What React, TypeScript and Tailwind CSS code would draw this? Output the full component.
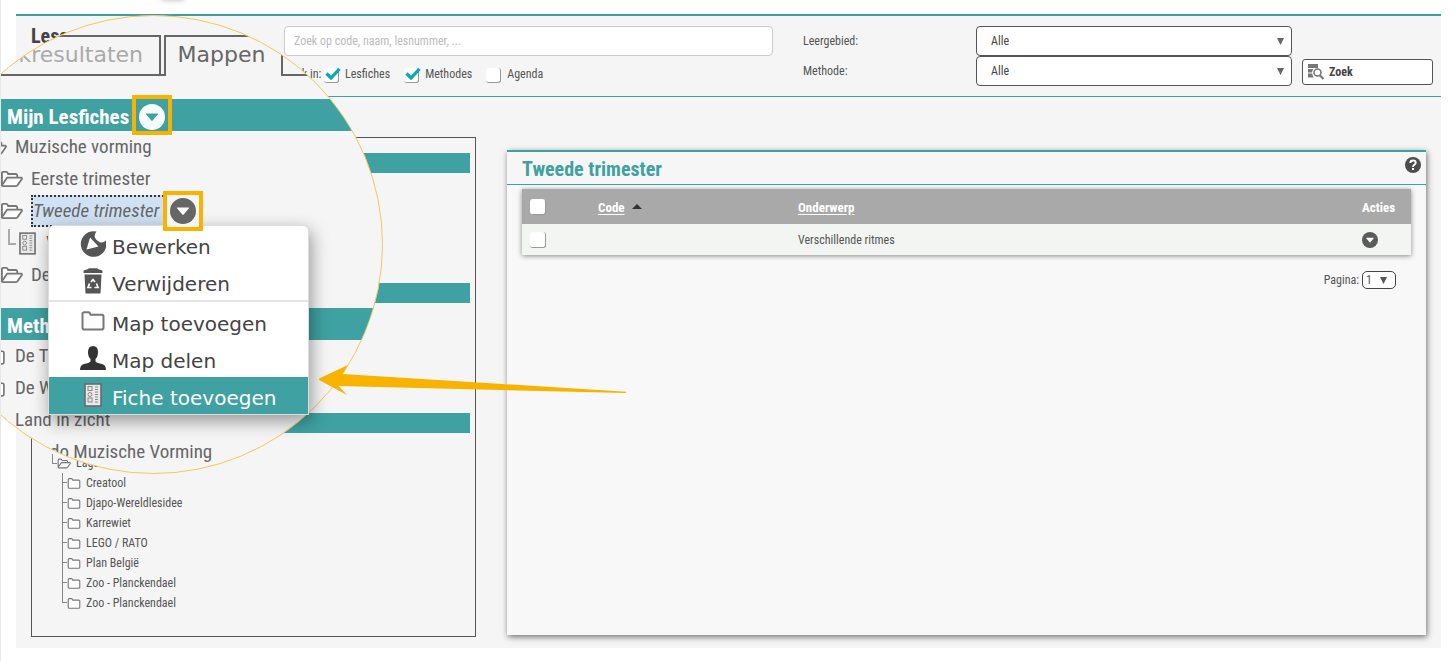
import type { ReactNode } from "react";

const condensed = "font-['Roboto_Condensed','Liberation_Sans_Narrow','Liberation_Sans',sans-serif]";
const wide = "font-['DejaVu_Sans',sans-serif]";

function OpenFolder({ className }: { className: string }) {
  return (
    <svg viewBox="0 0 24 18" className={className} fill="#fbfbfb" stroke="#777" strokeWidth="1.9" strokeLinejoin="round" aria-hidden="true">
      <path d="M2 15.5V3.2Q2 1.5 3.6 1.5h3.2Q8 1.5 8.4 3.8h8.2Q18 3.8 18 5.5V7.5H7.5L2 15.5Q2 16.5 3.5 16.5H16.5Q17.5 16.5 18.2 15.5L22.8 9Q23.4 7.5 21.8 7.5H18" />
    </svg>
  );
}

function Folder({ className }: { className: string }) {
  return (
    <svg viewBox="0 0 24 20" className={className} fill="#fdfdfd" stroke="#777" strokeWidth="2" strokeLinejoin="round" aria-hidden="true">
      <path d="M1.5 3Q1.5 1.2 3.2 1.2H7.5Q9 1.2 9.5 3.8H20.5Q22.5 3.8 22.5 5.6V16.8Q22.5 18.6 20.6 18.6H3.4Q1.5 18.6 1.5 16.8Z" />
    </svg>
  );
}

function Fiche({ className }: { className: string }) {
  return (
    <svg viewBox="0 0 18 24" className={className} fill="none" stroke="#8a8a8a" aria-hidden="true">
      <rect x="1" y="1" width="16" height="22" fill="#e9e9e9" stroke="#6a6a6a" strokeWidth="1.6" />
      <rect x="4" y="3.5" width="4" height="4" />
      <circle cx="6" cy="11.5" r="2" />
      <rect x="4" y="15" width="4" height="4" />
      <path d="M11 4h3M11 6.5h3M11 9h3M11 11.5h3M11 14h3M11 16.5h3M11 19h3" />
    </svg>
  );
}

function Down({ className, fill, arrow }: { className: string; fill: string; arrow: string }) {
  return (
    <svg viewBox="0 0 26 26" className={className} aria-hidden="true">
      <circle cx="13" cy="13" r="13" fill={fill} />
      <path d="M7.2 9.5h11.6q.6.4 0 1L13.6 16.6q-.6.6-1.2 0L7.2 10.5q-.5-.6 0-1z" fill={arrow} />
    </svg>
  );
}

function Check({ label, checked = false }: { label: string; checked?: boolean }) {
  return (
    <label className="relative flex items-center gap-1.5">
      <input
        type="checkbox"
        defaultChecked={checked}
        className="peer mt-[2px] h-[15px] w-[15px] appearance-none rounded-[3px] border-r border-b border-[#999] bg-white"
      />
      <svg viewBox="0 0 16 14" className="absolute top-[3px] left-[1px] hidden h-[14px] w-4 peer-checked:block" fill="none" stroke="#09a9b8" strokeWidth="3.2" aria-hidden="true">
        <path d="M1.5 6.5L6 11L14.5 1.8" />
      </svg>
      <span>{label}</span>
    </label>
  );
}

function RowCheck({ label }: { label: string }) {
  return (
    <input type="checkbox" aria-label={label} className="block h-4 w-4 appearance-none rounded-[3px] border-r border-b border-[#999] bg-white" />
  );
}

function Choice({ id, value }: { id: string; value: string }) {
  return (
    <div className="relative">
      <select id={id} className="block h-[30px] w-full appearance-none rounded border border-[#555] bg-white px-[14px] text-[12px] text-[#444]">
        <option>{value}</option>
      </select>
      <svg viewBox="0 0 8 8" className="pointer-events-none absolute top-3 right-2 h-[7px] w-[7px]" fill="#666" aria-hidden="true">
        <path d="M0 0h8L4 8z" />
      </svg>
    </div>
  );
}

function SearchBar() {
  return (
    <form className="grid grid-cols-[253px_minmax(0,1fr)_173px_316px_141px] border-t-2 border-b border-[#3fa1a1] pt-[10px] pr-2 pb-[10px] pl-[15px] text-[12px] text-[#555]">
      <h1 className="text-[20px] leading-5 font-bold text-[#444]">Lessen</h1>
      <div className="pr-[30px]">
        <input
          type="search"
          aria-label="Zoekterm"
          placeholder="Zoek op code, naam, lesnummer, ..."
          className="block h-[30px] w-full rounded border border-[#ccc] bg-white px-[9px] text-[12px] placeholder:text-[#bbb]"
        />
        <div className="flex items-center gap-[14px] pt-2 leading-5">
          <div className="flex items-center gap-1">
            <span className="w-9 whitespace-nowrap">Zoek in:</span>
            <Check label="Lesfiches" checked />
          </div>
          <Check label="Methodes" checked />
          <Check label="Agenda" />
        </div>
      </div>
      <div className="flex flex-col leading-[30px]">
        <label htmlFor="leergebied">Leergebied:</label>
        <label htmlFor="methode">Methode:</label>
      </div>
      <div>
        <Choice id="leergebied" value="Alle" />
        <Choice id="methode" value="Alle" />
      </div>
      <div className="flex items-end pb-[1px] pl-[10px]">
        <button type="button" className="flex h-[26px] grow items-center gap-1 rounded-[3px] border border-[#555] bg-white pl-1 font-bold text-[#444]">
          <svg viewBox="0 0 18 17" className="mb-[2px] h-[17px] w-[18px]" fill="#777" aria-hidden="true">
            <path d="M1 1h10v4H1zM1 6h5.2Q5 8 5 9.5H1zM1 10.5h4.2Q5.5 12.8 7 14.500H1z" />
            <path d="M13 12.5L16.5 16" stroke="#777" strokeWidth="2.2" />
            <circle cx="10.500" cy="9.500" r="3.5" fill="#fff" stroke="#777" strokeWidth="1.6" />
          </svg>
          Zoek
        </button>
      </div>
    </form>
  );
}

const folders = ["Creatool", "Djapo-Wereldlesidee", "Karrewiet", "LEGO / RATO", "Plan België", "Zoo - Planckendael", "Zoo - Planckendael"];

function TreePanel() {
  return (
    <nav className="w-[445px] shrink-0 border border-[#555] px-[5px] pt-[15px] pb-[23px] text-[12px] text-[#555]">
      <div className="mb-[110px] h-5 bg-[#3fa1a1]" />
      <div className="mb-[110px] h-5 bg-[#3fa1a1]" />
      <div className="mb-5 h-5 bg-[#3fa1a1]" />
      <div className="flex h-5 items-center pl-[15px] leading-5">
        <span className="-mt-2 h-[10px] w-[5px] border-b border-l border-[#888]" />
        <OpenFolder className="mr-[5px] h-[11px] w-[14px]" />
        Lager
      </div>
      <ul className="pl-[25px]">
        {folders.map((name, i) => (
          <li key={i} className="flex h-5 items-center leading-5">
            <span className="flex h-5 w-[5px] flex-col">
              <span className="h-[10px] border-b border-l border-[#888]" />
              {i < folders.length - 1 && <span className="grow border-l border-[#888]" />}
            </span>
            <Folder className="mr-[5px] h-[11px] w-[14px]" />
            <a href="#map">{name}</a>
          </li>
        ))}
      </ul>
    </nav>
  );
}

function LessonPanel() {
  return (
    <section className="mt-[13px] mb-[2px] min-w-0 grow border-t-2 border-[#3fa1a1] bg-[#f8f8f8] text-[12px] text-[#555] shadow-[1px_2px_6px_rgba(0,0,0,0.55)]">
      <div className="flex h-[33px] items-center justify-between border-b border-[#3fa1a1] bg-[#f6f6f6] pr-[5px] pl-[15px]">
        <h2 className="pt-[2px] text-[20px] leading-6 font-bold text-[#3fa1a1]">Tweede trimester</h2>
        <button type="button" aria-label="Help" className="mb-[6px]">
          <svg viewBox="0 0 16 16" className="block h-4 w-4" aria-hidden="true">
            <circle cx="8" cy="8" r="8" fill="#4d4d4d" />
            <path d="M5.3 6Q5.3 3.5 8 3.5T10.7 5.8Q10.7 7 9 8Q8 8.7 8 10" fill="none" stroke="#fff" strokeWidth="1.9" />
            <rect x="7" y="11" width="2" height="2" fill="#fff" />
          </svg>
        </button>
      </div>
      <div className="px-[15px] pt-1">
        <table className="w-full table-fixed border-collapse text-left shadow-[0_1px_5px_rgba(0,0,0,0.45)]">
          <thead>
            <tr className="h-[35px] bg-[#a9a9a9] text-[13px] text-white">
              <th className="w-[76px] pl-2"><RowCheck label="Alles" /></th>
              <th className="w-[200px] pt-[2px]">
                <a href="#code" className="underline underline-offset-2">Code</a>
                <svg viewBox="0 0 10 5" className="mb-[3px] ml-[7px] inline h-[5px] w-[10px]" fill="#333" aria-hidden="true"><path d="M0 5L5 0l5 5z" /></svg>
              </th>
              <th className="pt-[2px]"><a href="#onderwerp" className="underline underline-offset-2">Onderwerp</a></th>
              <th className="w-[49px] pt-[2px]">Acties</th>
            </tr>
          </thead>
          <tbody>
            <tr className="h-[31px] bg-[#f3f5f2]">
              <td className="pl-2"><RowCheck label="Verschillende ritmes" /></td>
              <td />
              <td>Verschillende ritmes</td>
              <td>
                <button type="button" aria-label="Acties" className="block">
                  <Down className="h-4 w-4" fill="#5b5b5b" arrow="#fff" />
                </button>
              </td>
            </tr>
          </tbody>
        </table>
        <div className="flex items-center justify-end gap-[3px] pt-4 pr-[15px]">
          <label htmlFor="pagina">Pagina:</label>
          <div className="relative">
            <select id="pagina" className="block h-[18px] w-[34px] appearance-none rounded-[5px] border border-[#444] bg-white pl-[3px] text-[12px] leading-4">
              <option>1</option>
            </select>
            <svg viewBox="0 0 8 8" className="pointer-events-none absolute top-[6px] right-[9px] h-[7px] w-[7px]" fill="#555" aria-hidden="true"><path d="M0 0h8L4 8z" /></svg>
          </div>
        </div>
      </div>
    </section>
  );
}

function LensRow({ icon, children }: { icon?: ReactNode; children: ReactNode }) {
  return <div className="flex h-8 items-center whitespace-nowrap">{icon}{children}</div>;
}

function LensHeading({ children }: { children: ReactNode }) {
  return <h2 className="flex h-8 items-center bg-[#3fa1a1] pt-[6px] pl-[7px] text-[21px] font-bold text-white">{children}</h2>;
}

function Lens() {
  return (
    <div className="absolute top-[15px] -left-[77px] h-[459px] w-[459px] overflow-hidden rounded-full border border-[#f3c95c] bg-[#f5f5f5] pt-[19px] pl-[75px] text-[19px] text-[#666]">
      <div className={`flex h-[41px] text-[22px] leading-[35px] ${wide}`}>
        <button type="button" className="flex w-[161px] justify-end border-2 border-l-0 border-[#666] pr-4 text-[#aaa]">Zoekresultaten</button>
        <div className="w-[3px] border-b-2 border-[#666]" />
        <button type="button" className="flex w-[119px] justify-center border-2 border-b-0 border-[#666] pr-1">Mappen</button>
        <div className="grow border-b-2 border-[#666]" />
      </div>
      <div className="pt-[23px]">
        <LensHeading>Mijn Lesfiches</LensHeading>
      </div>
      <LensRow icon={<OpenFolder className="mr-2 -ml-[15px] h-[18px] w-[22px] shrink-0" />}>Muzische vorming</LensRow>
      <LensRow icon={<OpenFolder className="mr-2 h-[18px] w-[23px] shrink-0" />}>Eerste trimester</LensRow>
      <LensRow icon={<OpenFolder className="mr-2 h-[18px] w-[23px] shrink-0" />}>
        <span className="w-[136px] border-2 border-dotted border-[#333] bg-[#cfe1f3] leading-7 italic">Tweede trimester</span>
      </LensRow>
      <LensRow
        icon={
          <>
            <span className="mr-[3px] mb-3 ml-2 h-4 w-2 border-b-2 border-l-2 border-[#aaa]" />
            <Fiche className="mr-[10px] h-[23px] w-[17px] shrink-0" />
          </>
        }
      >
        V
      </LensRow>
      <LensRow icon={<OpenFolder className="mr-2 h-[18px] w-[23px] shrink-0" />}>De</LensRow>
      <div className="pt-[17px]">
        <LensHeading>Meth</LensHeading>
      </div>
      <LensRow icon={<Folder className="mr-[9px] -ml-4 h-[17px] w-[22px] shrink-0" />}>De Ta</LensRow>
      <LensRow icon={<Folder className="mr-[9px] -ml-4 h-[17px] w-[22px] shrink-0" />}>De W</LensRow>
      <LensRow icon={<OpenFolder className="mr-[9px] -ml-4 h-[18px] w-[22px] shrink-0" />}>Land in zicht</LensRow>
      <LensRow><span className="pl-[50px]">do Muzische Vorming</span></LensRow>
    </div>
  );
}

function MenuItem({ icon, label, active = false }: { icon: ReactNode; label: string; active?: boolean }) {
  return (
    <button
      type="button"
      role="menuitem"
      className={`flex h-[37px] w-full items-center gap-[6px] pl-[31px] text-left whitespace-nowrap ${active ? "bg-[#3fa1a1] text-white" : "text-[#444]"}`}
    >
      <span className="flex w-[26px] justify-center pb-[2px]">{icon}</span>
      <span className="pt-1">{label}</span>
    </button>
  );
}

function ContextMenu() {
  return (
    <div role="menu" className={`absolute top-[225px] left-[47px] w-[261px] rounded-t-md border border-[#ddd] bg-white text-[20px] leading-6 shadow-[2px_6px_18px_rgba(0,0,0,0.4)] ${wide}`}>
      <MenuItem
        label="Bewerken"
        icon={
          <svg viewBox="0 0 26 26" className="h-[26px] w-[26px]" aria-hidden="true">
            <path d="M16.500 .6A12.800 12.800 0 1 0 25.900 9.500Q23 12.500 19.800 11.200Q16.500 10 14.800 6.500Q14.300 3 16.500 .6Z" fill="#555" />
            <path d="M10 6.500L18.500 15.500L6.500 18.500Z" fill="#fff" />
          </svg>
        }
      />
      <MenuItem
        label="Verwijderen"
        icon={
          <svg viewBox="0 0 20 26" className="h-[26px] w-5" aria-hidden="true">
            <path d="M.5 5V3Q1 1.6 4 1.4L6 .3h8l2 1.1q3 .2 3.5 1.6v2zM1.5 6.5h17L17.5 25.5H2.5z" fill="#555" />
            <path d="M8 14l2-2.500 2 2.500M13.500 15.500l1.500 4h-3.500M8.500 19.500H5L6.500 15.500" fill="none" stroke="#fff" strokeWidth="1.7" />
          </svg>
        }
      />
      <div className="mb-[1px] h-[2px] bg-[#e4e4e4]" />
      <MenuItem label="Map toevoegen" icon={<Folder className="h-5 w-6" />} />
      <MenuItem
        label="Map delen"
        icon={
          <svg viewBox="0 0 26 24" className="h-6 w-[26px]" fill="#333" aria-hidden="true">
            <path d="M13 0Q18 0 18 6Q18 11 15.5 13V15.5Q17 17 22 18Q26 19 26 24H0Q0 19 4 18Q9 17 10.5 15.5V13Q8 11 8 6Q8 0 13 0Z" />
          </svg>
        }
      />
      <MenuItem active label="Fiche toevoegen" icon={<Fiche className="h-6 w-[18px]" />} />
    </div>
  );
}

export default function App() {
  return (
    <div className={`relative min-h-screen overflow-hidden border-l border-[#e8e8e8] bg-white pt-[14px] pr-[15px] pb-[13px] pl-[15px] ${condensed}`}>
      <main className="bg-[#f5f5f5] pb-[11px]">
        <SearchBar />
        <div className="flex gap-[31px] px-[15px] pt-10">
          <TreePanel />
          <LessonPanel />
        </div>
      </main>
      <div className="absolute -top-1 left-40 h-[5px] w-6 rounded-full bg-[#ccc] blur-[2px]" />
      <Lens />
      <ContextMenu />
      <div className="absolute top-[95px] left-[131px] flex h-10 w-10 items-center justify-center border-4 border-[#f8b300]">
        <Down className="mt-[3px] h-[26px] w-[26px]" fill="#f7fdfd" arrow="#3fa1a1" />
      </div>
      <div className="absolute top-[191px] left-[162px] flex h-10 w-10 items-center justify-center border-4 border-[#f8b300] bg-[#f5f5f5]">
        <Down className="h-[26px] w-[26px]" fill="#666" arrow="#fff" />
      </div>
      <svg viewBox="318 364 310 33" className="absolute top-[364px] left-[317px] h-[33px] w-[310px]" fill="#f8b300" aria-hidden="true">
        <path d="M319 378.5L348 365L342.5 374L626 391.7V393L338.5 386L347 395L319 380Z" />
      </svg>
    </div>
  );
}
